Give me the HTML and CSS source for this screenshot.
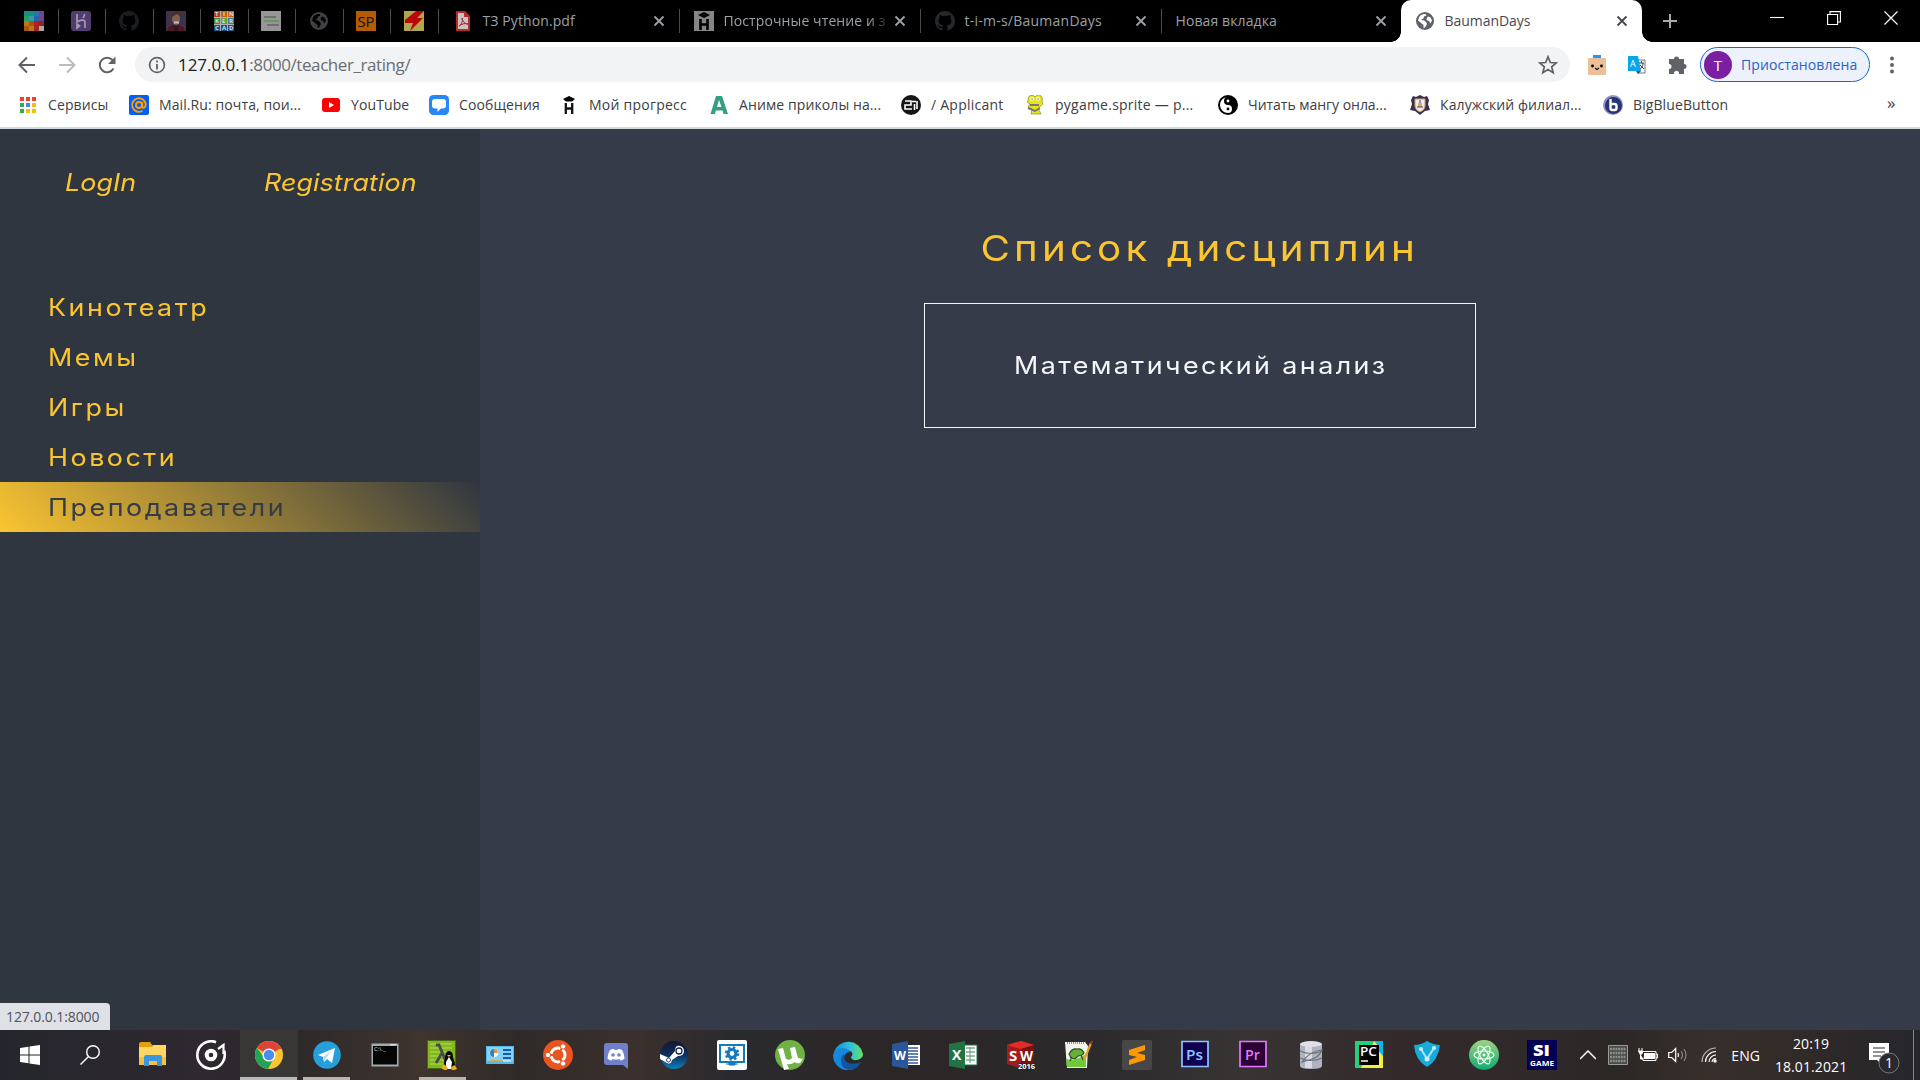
FILE: index.html
```html
<!DOCTYPE html>
<html lang="ru">
<head>
<meta charset="utf-8">
<title>BaumanDays</title>
<link rel="stylesheet" href="styles.css">
</head>
<body>
<svg class="defs" width="0" height="0" aria-hidden="true">
  <defs>
    <symbol id="x" viewBox="0 0 12 12"><path d="M1.5 1.5l9 9M10.500 1.500l-9 9" stroke="currentColor" stroke-width="1.900" fill="none"/></symbol>
    <symbol id="octocat" viewBox="0 0 16 16"><path fill="currentColor" d="M8 0C3.580 0 0 3.580 0 8c0 3.540 2.290 6.530 5.470 7.590.4.070.55-.17.55-.38 0-.19-.01-.82-.01-1.490-2.010.37-2.530-.49-2.690-.94-.09-.23-.48-.94-.82-1.130-.28-.15-.68-.52-.01-.53.63-.01 1.080.58 1.230.82.72 1.210 1.870.87 2.330.66.07-.52.28-.87.51-1.070-1.780-.2-3.640-.89-3.640-3.950 0-.87.31-1.590.82-2.150-.08-.2-.36-1.020.08-2.120 0 0 .67-.21 2.200.82.64-.18 1.320-.27 2-.27s1.360.09 2 .27c1.530-1.040 2.200-.82 2.200-.82.44 1.100.16 1.920.08 2.120.51.56.82 1.270.82 2.150 0 3.070-1.870 3.750-3.650 3.950.29.25.54.73.54 1.480 0 1.070-.01 1.930-.01 2.200 0 .21.15.46.55.38A8 8 0 0 0 16 8c0-4.420-3.580-8-8-8z"/></symbol>
    <symbol id="globe" viewBox="0 0 20 20"><circle cx="10" cy="10" r="9" fill="currentColor"/><path d="M4 6.500C5 4 7.500 2.800 10.500 3l1 1.500-2.500 1-.5 2L6 9l3 .5 2 1.500 1 2-2 3.500-1.500.5v-3L6 12 3 9.500zM13 5.500l2.500 1 1.500 3-1.500 3-1.500-2.500-2.500-1 .5-2.500z" fill="var(--cut)"/></symbol>
  </defs>
</svg>

<header class="browser">
  <div class="tabs">
    <div class="pin"><svg viewBox="0 0 20 20"><path fill="#168e82" d="M0 0h10v5H0z"/><path fill="#2478ad" d="M10 0h5v5h-5z"/><path fill="#7a3f94" d="M15 0h5v10h-5z"/><path fill="#2b9b66" d="M0 5h5v5H0z"/><path fill="#2aa0a5" d="M5 5h5v5H5z"/><path fill="#2b64a5" d="M10 5h5v5h-5z"/><path fill="#b87b14" d="M0 10h10v10H0z"/><path fill="#b84a18" d="M5 10h10v5H5z"/><path fill="#a92420" d="M10 10h5v10h-5z"/><path fill="#8c2424" d="M15 10h5v5h-5z"/><path fill="#aaa" d="M15 15h5v5h-5z"/><path fill="#a9580e" d="M0 15h5v5H0z"/></svg></div>
    <div class="pin"><svg viewBox="0 0 20 20"><rect width="20" height="20" rx="3" fill="#503c6e"/><path d="M6 3v8c3-2 8-3 8 0v6M13.500 3c0 2-.6 3-1.500 4M6 13v4l2.500-2z" stroke="#a69bb5" stroke-width="1.700" fill="none"/></svg></div>
    <div class="pin pin-dark"><svg><use href="#octocat"/></svg></div>
    <div class="pin"><svg viewBox="0 0 20 20"><path fill="#3e3348" d="M0 0h20v20H0z"/><path fill="#4f1728" d="M1 20c1-5 4-6 9-6s8 2 9 6z"/><ellipse cx="10" cy="8" rx="4" ry="6" fill="#80604f"/><path d="M6 6c0-7 8-7 8-1l-3-2z" fill="#4a2c23"/><path d="M8 10.500h5v2H8z" fill="#c8b8b0"/><path d="M8 14l2 3 2-3v6H8z" fill="#281823"/></svg></div>
    <div class="pin"><svg viewBox="0 0 20 20"><path fill="#aeb3b4" d="M0 0h20v20H0z"/><path fill="#b73a24" d="M0 0h6v6H0z"/><path fill="#c26118" d="M7 0h6v6H7zM14 0h6v6h-6z"/><path fill="#348b43" d="M0 7h6v6H0z"/><path fill="#6d9b28" d="M7 7h6v6H7z"/><path fill="#2b86a5" d="M14 7h6v6h-6z"/><path fill="#19548b" d="M0 14h6v6H0zM7 14h6v6H7zM14 14h6v6h-6z"/><g fill="#ddd" class="tiny" font-size="6"><text x="1" y="5.300">T</text><text x="9" y="5.300">I</text><text x="15" y="5.300">N</text><text x="1" y="12.300">K</text><text x="8" y="12.300">E</text><text x="15" y="12.300">R</text><text x="1" y="19.300">C</text><text x="8" y="19.300">A</text><text x="15" y="19.300">D</text></g></svg></div>
    <div class="pin"><svg viewBox="0 0 20 20"><path fill="#969696" d="M0 0h20v20H0z"/><path d="M3 6h12M6 14h12" stroke="#484848" stroke-width="1.200"/><path d="M3 10h15" stroke="#4f963e" stroke-width="1.200"/></svg></div>
    <div class="pin pin-globe"><svg><use href="#globe"/></svg></div>
    <div class="pin"><svg viewBox="0 0 20 20"><path fill="#b55b00" d="M0 0h20v20H0z"/><text x="1.500" y="15.500" font-size="14" textLength="17" lengthAdjust="spacingAndGlyphs" fill="#111">SP</text></svg></div>
    <div class="pin"><svg viewBox="0 0 20 20"><path fill="#b0a650" d="M0 0h20v20H0z"/><path fill="#b80806" d="M12 0h8l-7 7h6L6 20l3-8H1V9z"/></svg></div>
    <div class="tab"><svg class="fav" viewBox="0 0 20 20"><path d="M3 0h9l5 5v15H3z" fill="#b52b2b"/><path d="M5 2h6l4 4v12H5z" fill="#c8c4c4"/><path d="M11 1v5h5" fill="#b52b2b"/><path d="M6 15c3-2 4-5 3-8 1 4 3 6 6 6-4-1-6 0-9 2z" stroke="#a02020" fill="none"/></svg><span>ТЗ Python.pdf</span><svg class="close"><use href="#x"/></svg></div>
    <div class="tab"><svg class="fav" viewBox="0 0 20 20"><path fill="#858585" d="M0 0h20v20H0z"/><path d="M4 4l6-3 6 3-6 3z" fill="#000"/><path d="M6.500 8v11M13.500 8v11M7 13.500h6" stroke="#000" stroke-width="2.600"/></svg><span class="fade">Построчные чтение и з</span><svg class="close"><use href="#x"/></svg></div>
    <div class="tab"><svg class="fav git"><use href="#octocat"/></svg><span class="git-title">t-i-m-s/BaumanDays</span><svg class="close"><use href="#x"/></svg></div>
    <div class="tab tab-last"><span>Новая вкладка</span><svg class="close"><use href="#x"/></svg></div>
    <div class="tab tab-active"><svg class="fav"><use href="#globe"/></svg><span>BaumanDays</span><svg class="close"><use href="#x"/></svg></div>
    <svg class="plus" viewBox="0 0 16 16"><path d="M8 1v14M1 8h14" stroke="#aaa" stroke-width="2"/></svg>
    <div class="window-buttons">
      <svg viewBox="0 0 14 14"><path d="M0 6.500h14" stroke="#fff" stroke-width="1.100"/></svg>
      <svg viewBox="0 0 14 14"><path d="M.6 3.500h10v10H.6zM3 3V.6h10.400V11H11" fill="none" stroke="#fff" stroke-width="1.100"/></svg>
      <svg viewBox="0 0 14 14"><path d="M.5.5l13 13M13.500.500l-13 13" stroke="#fff" stroke-width="1.200"/></svg>
    </div>
  </div>

  <div class="toolbar">
    <div class="nav-buttons">
      <svg viewBox="0 0 20 20"><path d="M18 10H3M10 2.500L2.500 10l7.500 7.500" fill="none" stroke="#5f6368" stroke-width="2"/></svg>
      <svg viewBox="0 0 20 20"><path d="M2 10h15M10 2.500l7.500 7.500-7.500 7.500" fill="none" stroke="#babcbe" stroke-width="2"/></svg>
      <svg viewBox="0 0 20 20"><path d="M16.500 13.500A7.300 7.300 0 1 1 15.500 5" fill="none" stroke="#5f6368" stroke-width="2"/><path d="M18.500 1.500V9H11z" fill="#5f6368"/></svg>
    </div>
    <div class="address">
      <svg viewBox="0 0 18 18"><circle cx="9" cy="9" r="7.400" fill="none" stroke="#5f6368" stroke-width="1.700"/><path d="M9 4.500v2M9 8v5.500" stroke="#5f6368" stroke-width="1.800"/></svg>
      <span class="url"><b>127.0.0.1</b>:8000/teacher_rating/</span>
      <svg class="star" viewBox="0 0 20 20"><path d="M10 1.800l2.300 5.700 6 .4-4.600 3.900 1.500 5.900-5.200-3.200-5.200 3.200 1.500-5.900L1.700 7.900l6-.4z" fill="none" stroke="#5f6368" stroke-width="1.700"/></svg>
    </div>
    <div class="extensions">
      <svg viewBox="0 0 20 20"><path d="M6 0h8v4H6z" fill="#2196f3"/><rect x="1" y="3" width="18" height="17" rx="1" fill="#ecbf98"/><circle cx="5.500" cy="11" r="1.400"/><circle cx="14.500" cy="11" r="1.400"/><path d="M8 13l2 1.500 2-1.500" fill="none" stroke="#111" stroke-width="1.200"/></svg>
      <svg viewBox="0 0 20 20"><path d="M9 5h9v13h-7z" fill="#fff" stroke="#777"/><path d="M1 1h10l3 15H1z" fill="#08a7ec"/><path d="M9 16h5l-3 3z" fill="#124f78"/><text x="3" y="12" font-size="9" fill="#fff">A</text><path d="M12 8h5M14.500 6v2M16 8c0 3-1 5-3 6M13 10l4 4" stroke="#444" fill="none"/></svg>
      <svg viewBox="0 0 20 20"><path d="M2 4h5a2.500 2.500 0 1 1 5 0h5v5a2.500 2.500 0 1 1 0 5v5h-5a2.600 2.600 0 1 0-5 0H2v-5a2.500 2.500 0 1 0 0-5z" fill="#5f6368"/></svg>
    </div>
    <div class="profile"><span class="avatar">T</span><span>Приостановлена</span></div>
    <svg class="menu" viewBox="0 0 6 18"><g fill="#5f6368"><circle cx="3" cy="2.500" r="2"/><circle cx="3" cy="9" r="2"/><circle cx="3" cy="15.500" r="2"/></g></svg>
  </div>

  <nav class="bookmarks">
    <a><svg viewBox="0 0 20 20"><path fill="#ea4335" d="M2 2h4v4H2zM8 2h4v4H8zM14 2h4v4h-4z"/><path fill="#34a853" d="M2 8h4v4H2zM2 14h4v4H2z"/><path fill="#4285f4" d="M8 8h4v4H8z"/><path fill="#fbbc05" d="M14 8h4v4h-4zM8 14h4v4H8zM14 14h4v4h-4z"/></svg>Сервисы</a>
    <a><svg viewBox="0 0 20 20"><rect width="20" height="20" rx="2" fill="#005ff9"/><circle cx="10" cy="10" r="3" fill="none" stroke="#ff9e00" stroke-width="1.900"/><path d="M13.200 7v4c0 3 3.500 2 3.500-1A6.800 6.800 0 1 0 13.500 15.800" fill="none" stroke="#ff9e00" stroke-width="1.900"/></svg>Mail.Ru: почта, пои...</a>
    <a><svg viewBox="0 0 20 20"><rect x="1" y="3" width="18" height="14" rx="3" fill="red"/><path d="M8 7v6l5-3z" fill="#fff"/></svg>YouTube</a>
    <a><svg viewBox="0 0 20 20"><rect width="20" height="20" rx="4.500" fill="#2787f5"/><path d="M6 4h8q3 0 3 3v3.500q0 3-3 3h-2L8.500 17v-3.500H6q-3 0-3-3V7q0-3 3-3z" fill="#fff"/></svg>Сообщения</a>
    <a class="wide"><svg viewBox="0 0 20 20"><path d="M4 4l6-3 6 3-3 2.500H7z"/><path d="M6.800 8v11M13.200 8v11M7 13.500h6" stroke="#111" stroke-width="2.300"/></svg>Мой прогресс</a>
    <a><svg viewBox="0 0 20 20"><path d="M1.500 19L7 1h6l6 18h-4.500l-1-3.500H6.800L6 19zM8 12h4.500L10 5z" fill="#369f80" fill-rule="evenodd"/></svg>Аниме приколы на...</a>
    <a class="wide"><svg viewBox="0 0 20 20"><circle cx="10" cy="10" r="10" fill="#161616"/><path d="M4 6h6v4H4v4h7M13.500 9v6M16 6v8M11 6.500h4" fill="none" stroke="#fff" stroke-width="1.600"/></svg>/ Applicant</a>
    <a class="wide"><svg viewBox="0 0 20 20"><path d="M5 9q-4-1-2-4 0-5 4-4.500Q9 0 10 2q3-4 6-1 2 2 1 5 2 4-3 6v3l2 4H6l1-5-4-2z" fill="#e8e51f" stroke="#8a8b1a" stroke-width=".7"/><circle cx="7" cy="4" r="1.800" fill="#fff"/><circle cx="13" cy="4" r="1.800" fill="#fff"/><path d="M5 10h9M3 13l7 3 5-3" fill="none" stroke="#777" stroke-width="2"/><circle cx="7" cy="4" r=".6"/><circle cx="13" cy="4" r=".6"/></svg>pygame.sprite — p...</a>
    <a class="tight"><svg viewBox="0 0 20 20"><circle cx="10" cy="10" r="10"/><path d="M10 2a8 8 0 0 0 0 16 4 4 0 0 0 0-8 4 4 0 0 1 0-8z" fill="#fff"/><circle cx="10" cy="6" r="1.400" fill="#fff"/><circle cx="10" cy="14" r="1.400"/></svg>Читать мангу онла...</a>
    <a><svg viewBox="0 0 20 20"><path d="M3 1l3 1 4-2 4 2 3-1 2 4-1 4 2 6-5 1-5 4-5-4-5-1 2-6-1-4z" fill="#39304d"/><path d="M5 4h10v7q0 4-5 6-5-2-5-6z" fill="#f3e9ea" stroke="#c2a16b"/><path d="M8 8h4v4H8z" fill="#e3ae3c"/><path d="M7 12h6M10 5v3" stroke="#34409a"/></svg>Калужский филиал...</a>
    <a><svg viewBox="0 0 20 20"><circle cx="10" cy="10" r="10" fill="#8d93be"/><circle cx="10.500" cy="10.500" r="8.500" fill="#263479"/><path d="M7.500 4v9q0 2 2 2h2q2 0 2-2v-2q0-2-2-2h-4" fill="none" stroke="#fff" stroke-width="2.400"/></svg>BigBlueButton</a>
    <span class="more">»</span>
  </nav>
</header>

<div class="page">
  <aside class="sidebar">
    <div class="auth"><a><span>LogIn</span></a><a><span>Registration</span></a></div>
    <nav class="sections">
      <a><span>Кинотеатр</span></a>
      <a><span>Мемы</span></a>
      <a><span>Игры</span></a>
      <a><span>Новости</span></a>
      <a class="current"><span>Преподаватели</span></a>
    </nav>
    <div class="status">127.0.0.1:8000</div>
  </aside>
  <main>
    <h1>Список дисциплин</h1>
    <a class="discipline"><span>Математический анализ</span></a>
  </main>
</div>

<footer class="taskbar">
  <div class="start"><svg viewBox="0 0 20 20"><path d="M0 3l8.500-1.200v7.700H0zM9.500 1.600L20 0v9.500H9.500zM0 10.500h8.500v7.700L0 17zM9.500 10.500H20V20L9.500 18.400z" fill="#fff"/></svg></div>
  <div class="search"><svg viewBox="0 0 20 20"><circle cx="13" cy="7" r="6.300" fill="none" stroke="#fff" stroke-width="1.400"/><path d="M8.500 11.500L.5 19.500" stroke="#fff" stroke-width="1.500"/></svg></div>
  <div class="apps">
    <div><svg viewBox="0 0 30 30"><path d="M1 4q0-2 2-2h9l2 3h14v10H1z" fill="#e0a010"/><path d="M1 7h13l2-2h12v20H1z" fill="#ffd563"/><path d="M1 17h27v8H1z" fill="#f6c044"/><path d="M6 26V17q0-2 2-2h14q2 0 2 2v9h-5v-5h-8v5z" fill="#3a96dd"/></svg></div>
    <div><svg viewBox="0 0 30 30"><path d="M20 2.200A13.700 13.700 0 1 0 28 10.500" fill="none" stroke="#fff" stroke-width="2.600"/><path d="M22 9l5.500-4v9" fill="none" stroke="#fff" stroke-width="2.200"/><circle cx="15" cy="15" r="4.300" fill="none" stroke="#fff" stroke-width="4"/></svg></div>
    <div class="focused"><svg viewBox="0 0 30 30"><circle cx="15" cy="15" r="14" fill="#fbc52d"/><path d="M15 15L2.900 8A14 14 0 0 1 27.100 8z" fill="#dc4437"/><path d="M2.900 8A14 14 0 0 0 14 29l6-11-5 2-5-3z" fill="#22a35a"/><path d="M15 8.500h12.400" stroke="#dc4437"/><circle cx="15" cy="15" r="6.600" fill="#fff"/><circle cx="15" cy="15" r="5.200" fill="#4a8af4"/></svg></div>
    <div class="open"><svg viewBox="0 0 30 30"><circle cx="15" cy="15" r="13.800" fill="#279fda"/><path d="M6 15l17-7-3 15-5-4-3 3-1-5z" fill="#fff"/><path d="M11 17l9-7-6 8-2 4z" fill="#b9d9ec"/></svg></div>
    <div><svg viewBox="0 0 30 30"><path d="M1.500 3.500h27v23h-27z" fill="#a3abae"/><path d="M3 6h24v18.500H3z" fill="#050505"/><path d="M20 4.800h6" stroke="#eee"/><text x="4" y="11" font-size="6" fill="#ddd">C:\._</text></svg></div>
    <div class="open"><svg viewBox="0 0 30 30"><path d="M.5.500h28v28H.5z" fill="#82b91a" stroke="#4b6417"/><path d="M3 4h22M3 8h22M3 12h22M3 16h20M3 20h18M3 24h15" stroke="#b4d866"/><path d="M9 5h3l8 19M15 13L9 23" fill="none" stroke="#4a4a4a" stroke-width="2.800"/><path d="M18 19q0-8 4-8t4 6l3 10H16z" fill="#080808"/><path d="M19 22l3-5 3 5-1 7h-5z" fill="#fff"/><path d="M14 28l3-4 4 4-2 3zM24 27l4-2 2 4-5 2z" fill="#efac16"/><path d="M20 15h4l-2 2z" fill="#efac16"/></svg></div>
    <div><svg viewBox="0 0 30 30"><path d="M1 6h28v18H1z" fill="#55b8ec"/><path d="M2 7h26v14H2z" fill="#83d1f8"/><circle cx="9" cy="13" r="4.300" fill="#fff"/><path d="M9 13V9a4 4 0 0 1 4 4z" fill="#f09030"/><path d="M9 13v4a4 4 0 0 1 0-8z" fill="#2b82cd"/><path d="M18 10h8M18 14h8M18 18h8" stroke="#155cb0" stroke-width="2"/><path d="M5 21h11" stroke="#f39d20" stroke-width="1.500"/><path d="M18 21h8" stroke="#e8ffff"/></svg></div>
    <div><svg viewBox="0 0 30 30"><circle cx="15" cy="15" r="15" fill="#e95420"/><circle cx="15" cy="15" r="7" fill="none" stroke="#fff" stroke-width="3"/><path d="M15 15L5 15M15 15l5-9M15 15l5 9" stroke="#e95420" stroke-width="2"/><g fill="#fff" stroke="#e95420"><circle cx="5" cy="15" r="2.700"/><circle cx="20" cy="6.500" r="2.700"/><circle cx="20" cy="23.500" r="2.700"/></g></svg></div>
    <div><svg viewBox="0 0 30 30"><path d="M6 3h18q3 0 3 3v23l-5-4H6q-3 0-3-3V6q0-3 3-3z" fill="#7081ca"/><path d="M9 10q3-1.500 4-1l.5 1h3l.5-1q1-.5 4 1 2.500 4 2.500 8.500-2 2-4 2l-1-1.500q-3.500 1-7 0l-1 1.500q-2 0-4-2Q6.500 14 9 10z" fill="#fff"/><circle cx="12" cy="15" r="1.800" fill="#7081ca"/><circle cx="18" cy="15" r="1.800" fill="#7081ca"/></svg></div>
    <div><svg viewBox="0 0 30 30"><defs><linearGradient id="steam" x2="0" y2="1"><stop stop-color="#101833"/><stop offset=".5" stop-color="#102d5c"/><stop offset="1" stop-color="#0b82b9"/></linearGradient></defs><circle cx="15" cy="15" r="14" fill="url(#steam)"/><path d="M1 14l9 4 6-7q0-6 5-5 4 1 4 5 0 5-6 5l-6 4q-1 5-5 3l-7-4z" fill="#fff"/><circle cx="20" cy="11" r="3" fill="#fff" stroke="#152950" stroke-width="1.300"/><circle cx="9.500" cy="20" r="2" fill="none" stroke="#29477a"/></svg></div>
    <div><svg viewBox="0 0 30 30"><rect width="30" height="30" rx="2" fill="#fff"/><path d="M3 5h24v17H3z" fill="#fff" stroke="#1679bd" stroke-width="2"/><path d="M9 24h12M12 22h6v3h-6z" stroke="#1679bd" fill="#1679bd"/><circle cx="15" cy="13.500" r="4" fill="none" stroke="#1679bd" stroke-width="3.200"/><circle cx="15" cy="13.500" r="6" fill="none" stroke="#1679bd" stroke-width="2.500" stroke-dasharray="2.360 2.360"/></svg></div>
    <div><svg viewBox="0 0 30 30"><circle cx="15" cy="15" r="15" fill="#70b244"/><path d="M3 9l5-1 3 11q4 2 6-1L15 8l5-1 3 11 5 1-3 4q-4 1-5-1-4 3-8 2l2 5-5 1z" fill="#fff"/></svg></div>
    <div><svg viewBox="0 0 30 30"><defs><linearGradient id="edge"><stop stop-color="#168dd7"/><stop offset=".55" stop-color="#31bddb"/><stop offset="1" stop-color="#62e65d"/></linearGradient></defs><path d="M1 12A15 15 0 0 1 30 14c0 7-12 8-12 3 4-4-1-7-5-7q-7 0-12 7z" fill="url(#edge)"/><path d="M0 15q2-7 9-7 6 0 8 4-8 1-5 9 3 6 9 8A15 15 0 0 1 0 15z" fill="#1488dc"/><path d="M11 14q-1 7 5 9t12-1q-4 8-12 8-8-2-8-9 0-5 3-7z" fill="#11549f"/></svg></div>
    <div><svg viewBox="0 0 30 30"><path d="M15 5h14v20H15z" fill="#fff"/><path d="M17 8h10M17 11h10M17 14h10M17 17h10M17 20h10M17 23h10" stroke="#365b9f" stroke-width="1.400"/><path d="M1 4l16-3v28L1 26z" fill="#2b579a"/><text x="3" y="20" font-size="13" font-weight="700" fill="#fff" textLength="12" lengthAdjust="spacingAndGlyphs">W</text></svg></div>
    <div><svg viewBox="0 0 30 30"><path d="M15 5h14v20H15z" fill="#fff" stroke="#217346"/><path d="M18 8h9M18 12h9M18 16h9M18 20h9M22 7v16" stroke="#7aab8c" stroke-width="1.300"/><path d="M1 4l16-3v28L1 26z" fill="#217346"/><text x="4" y="20" font-size="14" font-weight="700" fill="#fff">X</text></svg></div>
    <div><svg viewBox="0 0 30 30"><path d="M1 5l14-4 13 4v20l-14 3L1 24z" fill="#a51c1d"/><path d="M1 5l14-4 13 4-13 4z" fill="#df2e27"/><path d="M15 9l13-4v20l-13 3z" fill="#77100f"/><text x="3" y="21" font-size="15" font-weight="700" fill="#fff">S</text><text x="14" y="20.500" font-size="14" font-weight="700" fill="#fff" textLength="13" lengthAdjust="spacingAndGlyphs">W</text><text x="12" y="28.500" font-size="7.500" font-weight="700" fill="#fff" stroke="#222" stroke-width="1.500" paint-order="stroke" textLength="17" lengthAdjust="spacingAndGlyphs">2016</text></svg></div>
    <div><svg viewBox="0 0 30 30"><path d="M1 2h20l3 4-1 22H3z" fill="#f4f4ef"/><path d="M2 19q9 3 20-5v13H3z" fill="#70c936"/><path d="M5 14q3-6 8-5 5-1 7 4-2 3-6 3l-3 3-4-1zM8 17l-2 4M17 15l2 5" fill="#67ad3b" stroke="#234d1c" stroke-width="1.100"/><path d="M3 3h18" stroke="#8c9692" stroke-dasharray="1 1" stroke-width="2"/><path d="M20 20L27 3" stroke="#e6a323" stroke-width="2.200"/><path d="M27 4l1-3" stroke="#a2313b" stroke-width="2.200"/></svg></div>
    <div><svg viewBox="0 0 30 30"><rect width="30" height="30" rx="2" fill="#474747"/><path d="M7 10l16-5v5l-8 3 8 2v5L7 25v-5l8-3-8-2z" fill="#ff9800"/></svg></div>
    <div><svg viewBox="0 0 30 30"><path d="M2 1.500h26v25H2z" fill="#10004f" stroke="#8cc5ff" stroke-width="1.700"/><text x="6" y="19.500" font-size="15" font-weight="600" fill="#8bcaff" textLength="17" lengthAdjust="spacingAndGlyphs">Ps</text></svg></div>
    <div><svg viewBox="0 0 30 30"><path d="M2 1.500h26v25H2z" fill="#2b0033" stroke="#e477ff" stroke-width="1.700"/><text x="7" y="19.500" font-size="15" font-weight="600" fill="#df7bf9" textLength="15" lengthAdjust="spacingAndGlyphs">Pr</text></svg></div>
    <div><svg viewBox="0 0 30 30"><path d="M4 4v22q0 3 11 3t11-3V4z" fill="#aeb2c1"/><path d="M9 4h7v24H9z" fill="#d8dae4"/><ellipse cx="15" cy="4" rx="11" ry="3" fill="#dfe0e8"/><path d="M4 11q11 5 22 0M4 18q11 5 22 0M6 22Q14 11 26 10q-3 8-13 10z" fill="none" stroke="#70747e" stroke-width="1.200"/></svg></div>
    <div><svg viewBox="0 0 30 30"><path d="M1 1h19L8 28H1z" fill="#20d27e"/><path d="M17 1h12v16z" fill="#12b7df"/><path d="M20 1l9 10v17H7z" fill="#f4ee42"/><path d="M24 1h5v15l-7-8z" fill="#11b5e3"/><path d="M5 5h20v20H5z"/><text x="6" y="16" font-size="12" font-weight="600" fill="#fff" textLength="17" lengthAdjust="spacingAndGlyphs">PC</text><path d="M7 21h7" stroke="#fff" stroke-width="1.500"/></svg></div>
    <div><svg viewBox="0 0 30 30"><path d="M2 5q7 0 13-4 7 4 13 4-2 16-13 22Q3 20 2 5z" fill="#18abd9"/><path d="M9 9l6 10 7-11" fill="none" stroke="#a5e3f8" stroke-width="2"/><g fill="#c5f1ff"><circle cx="9" cy="9" r="2"/><circle cx="15" cy="19" r="2.500"/><circle cx="22" cy="8" r="2"/></g></svg></div>
    <div><svg viewBox="0 0 30 30"><defs><linearGradient id="atom" x2="0" y2="1"><stop stop-color="#9bd583"/><stop offset="1" stop-color="#12a873"/></linearGradient></defs><circle cx="15" cy="15" r="15" fill="url(#atom)"/><g fill="none" stroke="#eaffef" stroke-width="1.200"><ellipse cx="15" cy="15" rx="10" ry="4"/><ellipse cx="15" cy="15" rx="10" ry="4" transform="rotate(60 15 15)"/><ellipse cx="15" cy="15" rx="10" ry="4" transform="rotate(120 15 15)"/></g><circle cx="15" cy="15" r="1.500" fill="#fff"/></svg></div>
    <div><svg viewBox="0 0 30 30"><path d="M0 0h30v30H0z" fill="#010052"/><text x="6" y="16" font-size="16" font-weight="800" fill="#fff" textLength="17" lengthAdjust="spacingAndGlyphs">SI</text><text x="3" y="25.500" font-size="7.500" font-weight="700" fill="#fff" textLength="24" lengthAdjust="spacingAndGlyphs">GAME</text></svg></div>
  </div>
  <div class="tray">
    <svg class="caret" viewBox="0 0 16 10"><path d="M0 9l8-8 8 8" fill="none" stroke="#fff" stroke-width="1.500"/></svg>
    <svg class="kb" viewBox="0 0 20 20"><path d="M.5.500h19v19H.5z" fill="#4a4b4a" stroke="#9a9b9a"/><path d="M2 4h16M2 8h16M2 12h16M2 16h16" stroke="#8b8e8b" stroke-width="2.600" stroke-dasharray="2 .7"/></svg>
    <svg class="battery" viewBox="0 0 20 14"><path d="M5 3.500h13v9H5v-3M18 6h1.500v4H18" fill="none" stroke="#fff"/><path d="M6 5h11v6H6z" fill="#fff"/><path d="M1 0v3M4 0v3M.500 3h4v2l-2 2zM2.500 6v5H5" stroke="#fff" fill="#fff"/></svg>
    <svg class="volume" viewBox="0 0 20 16"><path d="M.7 5.500h3l4-4v13l-4-4h-3zM10 6q1 2 0 4" fill="none" stroke="#fff" stroke-width="1.200"/><path d="M13 4q3 4 0 8M16 2q4 6 0 12" fill="none" stroke="#888" stroke-width="1.200"/></svg>
    <svg class="wifi" viewBox="0 0 16 16"><g fill="none" stroke="#fff" stroke-width="1.200"><path d="M1 15A14 14 0 0 1 15 1" stroke="#bbb"/><path d="M4.500 15A10.500 10.500 0 0 1 15 4.500M8 15a7 7 0 0 1 7-7M11 15a4 4 0 0 1 4-3.500"/></g><circle cx="14" cy="14" r="1.700" fill="#fff"/></svg>
    <span class="lang">ENG</span>
    <div class="clock"><span>20:19</span><span>18.01.2021</span></div>
    <svg class="notice" viewBox="0 0 31 31"><path d="M0 0h20v17H10v2l-2-2H0z" fill="#fff"/><path d="M4 5h12M4 9h12M4 13h8" stroke="#29272a" stroke-width="1.200"/><circle cx="20" cy="20" r="10" fill="#2b292c" stroke="#777"/><text x="20" y="25" font-size="14" fill="#fff" text-anchor="middle">1</text></svg>
  </div>
</footer>
</body>
</html>
```
FILE: styles.css
```css
* { box-sizing: border-box; }
html, body { margin: 0; height: 100%; }
body {
  display: flex;
  flex-direction: column;
  overflow: hidden;
  font: 14px "Open Sans", "Noto Sans", sans-serif;
  letter-spacing: .1px;
  color: #3c4043;
  white-space: nowrap;
}
svg { display: block; flex: none; }
svg text { letter-spacing: 0; }
.defs { position: absolute; }
.tiny { font-weight: 700; }

/* Browser chrome */
.browser { flex: none; height: 129px; background: #fff; border-bottom: 2px solid #d5d8dc; }
.tabs { display: flex; align-items: center; height: 42px; padding-left: 11px; background: #000; }
.pin {
  display: flex;
  align-items: center;
  justify-content: center;
  width: 47.5px;
  height: 24px;
  padding-right: 1px;
  border-right: 1.500px solid #4c4c4c;
}
.pin svg { width: 20px; height: 20px; }
.pin-dark { color: #1a1e22; }
.pin-globe { color: #3f4245; --cut: #000; }
.tab {
  display: flex;
  align-items: center;
  gap: 10px;
  width: 241px;
  height: 24px;
  padding: 0 13.500px 0 14px;
  border-right: 1px solid #4c4c4c;
  color: #9aa0a6;
}
.tab span { line-height: 19px; padding-bottom: 1px; }
.fav { width: 20px; height: 20px; }
.git { color: #24292e; }
.git-title { letter-spacing: .24px; }
.fade {
  width: 168px;
  margin-right: -12px;
  -webkit-mask-image: linear-gradient(90deg, #000 145px, transparent 168px);
  mask-image: linear-gradient(90deg, #000 145px, transparent 168px);
}
.close { width: 12px; height: 12px; margin-left: auto; }
.tab-last { width: 239px; border: 0; }
.tab-active {
  position: relative;
  height: 42px;
  border: 0;
  border-radius: 10px 10px 0 0;
  background: #fff;
  color: #45494d;
  letter-spacing: -.05px;
  --cut: #fff;
}
.tab-active .fav { color: #5f6368; }
.tab-active::before, .tab-active::after {
  content: "";
  position: absolute;
  bottom: 0;
  width: 10px;
  height: 10px;
}
.tab-active::before { left: -10px; background: radial-gradient(circle at 0 0, transparent 9.500px, #fff 10px); }
.tab-active::after { right: -10px; background: radial-gradient(circle at 100% 0, transparent 9.500px, #fff 10px); }
.plus { width: 16px; height: 16px; margin-left: 20px; }
.window-buttons { display: flex; gap: 43px; margin: 0 22px 6px auto; }
.window-buttons svg { width: 14px; height: 14px; }

.toolbar { display: flex; align-items: center; height: 45px; padding-left: 17px; }
.nav-buttons { display: flex; gap: 20px; width: 118px; }
.nav-buttons svg { width: 20px; height: 20px; }
.address {
  display: flex;
  align-items: center;
  gap: 12px;
  width: 1435px;
  height: 35px;
  padding: 0 12px 0 13px;
  border-radius: 18px;
  background: #f1f3f4;
  color: #6a6e73;
}
.address svg { width: 18px; height: 18px; }
.address .star { width: 20px; height: 20px; margin-left: auto; }
.url { font-size: 17px; letter-spacing: -.42px; }
.url b { font-weight: 400; color: #202124; letter-spacing: -.05px; }
.extensions { display: flex; gap: 20px; margin-left: 17px; }
.extensions svg { width: 20px; height: 20px; }
.profile {
  display: flex;
  align-items: center;
  gap: 9px;
  width: 170px;
  height: 35px;
  margin-left: 13px;
  padding-left: 3px;
  border: 1.500px solid #1967d2;
  border-radius: 18px;
  background: #ecf1fb;
  color: #2863c8;
}
.avatar {
  width: 28px;
  height: 28px;
  border-radius: 50%;
  background: #7b1fa2;
  color: #fff;
  font-size: 15px;
  line-height: 28px;
  text-align: center;
}
.menu { width: 6px; height: 18px; margin-left: 19px; }

.bookmarks {
  display: grid;
  grid-template-columns: 111px 192px 108px 130px 150px 192px 124px 193px 192px 193px 284px auto;
  align-items: center;
  height: 36px;
  padding-left: 18px;
  line-height: 18px;
}
.bookmarks a { display: flex; align-items: center; gap: 10px; }
.bookmarks .wide { letter-spacing: .24px; }
.bookmarks .tight { letter-spacing: -.03px; }
.bookmarks svg { width: 20px; height: 20px; }
.more { font-size: 17px; line-height: 16px; padding-bottom: 4px; }

/* BaumanDays page: the face is set slightly extended */
.page {
  display: flex;
  flex: 1;
  min-height: 0;
  background: #353b48;
  font-family: Inter, "Open Sans", sans-serif;
  font-size: 24px;
  color: #fbc531;
}
.page a span { display: inline-block; transform: scaleX(1.12); }
.sidebar {
  display: flex;
  flex-direction: column;
  flex: none;
  width: 480px;
  background: #2f3640;
}
.sidebar a span { transform-origin: 0 50%; }
.auth {
  display: grid;
  grid-template-columns: 199px auto;
  height: 153px;
  padding: 29px 0 0 65px;
  font-style: italic;
  line-height: 50px;
  letter-spacing: .05px;
}
.sections a {
  display: block;
  height: 50px;
  padding: 1px 0 0 48px;
  line-height: 50px;
  letter-spacing: 2.250px;
}
.sections .current { background: linear-gradient(45deg, #fbc531, #2f3640); color: #353b48; }
.status {
  width: 110px;
  height: 27px;
  margin-top: auto;
  padding-left: 6px;
  border-radius: 0 4px 0 0;
  background: #dee1e6;
  color: #50545a;
  font: 14px/27px "Open Sans", sans-serif;
  letter-spacing: -.1px;
}
main {
  display: flex;
  flex: 1;
  flex-direction: column;
  align-items: center;
  padding-top: 94px;
}
h1 {
  margin: 0 0 30px;
  font-size: 36px;
  font-weight: 400;
  line-height: 50px;
  letter-spacing: 3.700px;
  transform: scaleX(1.12);
}
.discipline {
  width: 552px;
  height: 125px;
  padding-left: 2px;
  border: 1px solid #f5f6fa;
  color: #f5f6fa;
  line-height: 123px;
  letter-spacing: 2.150px;
  text-align: center;
}

/* Windows taskbar */
.taskbar {
  display: flex;
  flex: none;
  height: 50px;
  background: linear-gradient(90deg, #25262d, #2e2830 10%, #2c2929 15%, #3f342e 22%, #2f2a28 27%, #3b302d 33%, #2a2a2e 38%, #2c2626 47%, #2b2a2c 57%, #383434 65%, #33292a 73%, #30292a 80%, #2b2725 84%, #382f2b 89%, #302a28 94%, #26262c);
  color: #fff;
}
.start, .search { display: flex; align-items: center; justify-content: center; width: 60px; }
.start svg, .search svg { width: 20px; height: 20px; }
.apps { display: flex; margin-left: 4px; }
.apps div {
  display: flex;
  align-items: center;
  justify-content: center;
  width: 57.9px;
  height: 50px;
}
.apps svg { width: 30px; height: 30px; }
.apps .open { background: linear-gradient(#b9b4b1, #b9b4b1) center bottom / 47px 3px no-repeat; }
.apps .focused { background: linear-gradient(#b9b9b9, #b9b9b9) center bottom / 57px 3px no-repeat, #393736; }
.tray { display: flex; align-items: center; flex: 1; padding-left: 9px; }
.caret { width: 16px; height: 10px; }
.kb { width: 20px; height: 20px; margin-left: 12px; }
.battery { width: 20px; height: 14px; margin-left: 10px; }
.volume { width: 20px; height: 16px; margin-left: 10px; }
.wifi { width: 16px; height: 16px; margin-left: 13px; }
.lang { margin-left: 14px; }
.clock {
  display: flex;
  flex-direction: column;
  align-items: center;
  width: 96px;
  margin-left: 3px;
  line-height: 23px;
}
.notice { width: 31px; height: 31px; margin: 7px 13px 0 auto; }
.tray::after { content: ""; width: 6px; height: 50px; border-left: 1px solid #888; }
```
